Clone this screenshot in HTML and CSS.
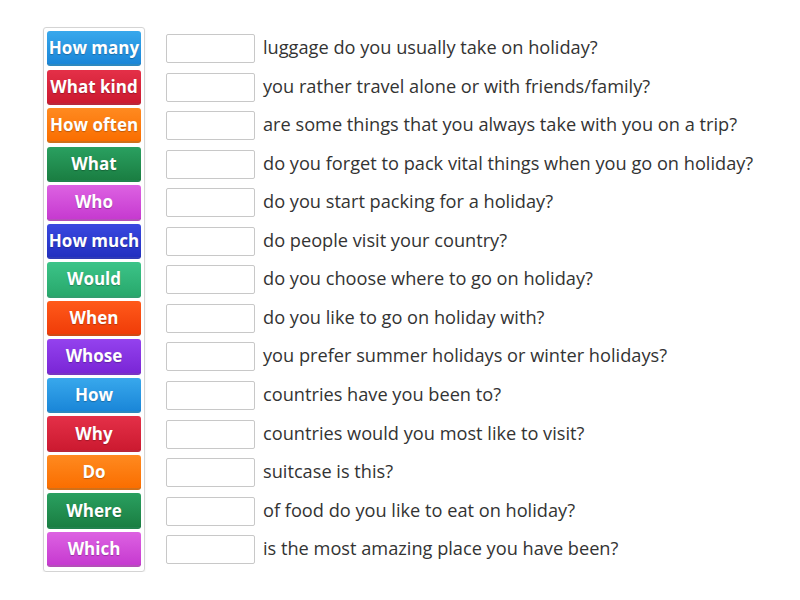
FILE: index.html
```html
<!DOCTYPE html>
<html lang="en">
<head>
  <meta charset="UTF-8">
  <title>Match up: Holiday questions</title>
  <link rel="stylesheet" href="styles.css">
</head>
<body>
  <div class="game">
    <!-- Answer tiles -->
    <div class="tiles">
      <div class="tile blue">How many</div>
      <div class="tile red">What kind</div>
      <div class="tile orange">How often</div>
      <div class="tile green">What</div>
      <div class="tile pink">Who</div>
      <div class="tile navy">How much</div>
      <div class="tile mint">Would</div>
      <div class="tile flame">When</div>
      <div class="tile purple">Whose</div>
      <div class="tile blue">How</div>
      <div class="tile red">Why</div>
      <div class="tile orange">Do</div>
      <div class="tile green">Where</div>
      <div class="tile pink">Which</div>
    </div>

    <!-- Question rows -->
    <div class="questions">
      <div class="row"><span class="slot"></span><span class="text">luggage do you usually take on holiday?</span></div>
      <div class="row"><span class="slot"></span><span class="text">you rather travel alone or with friends/family?</span></div>
      <div class="row"><span class="slot"></span><span class="text">are some things that you always take with you on a trip?</span></div>
      <div class="row"><span class="slot"></span><span class="text">do you forget to pack vital things when you go on holiday?</span></div>
      <div class="row"><span class="slot"></span><span class="text">do you start packing for a holiday?</span></div>
      <div class="row"><span class="slot"></span><span class="text">do people visit your country?</span></div>
      <div class="row"><span class="slot"></span><span class="text">do you choose where to go on holiday?</span></div>
      <div class="row"><span class="slot"></span><span class="text">do you like to go on holiday with?</span></div>
      <div class="row"><span class="slot"></span><span class="text">you prefer summer holidays or winter holidays?</span></div>
      <div class="row"><span class="slot"></span><span class="text">countries have you been to?</span></div>
      <div class="row"><span class="slot"></span><span class="text">countries would you most like to visit?</span></div>
      <div class="row"><span class="slot"></span><span class="text">suitcase is this?</span></div>
      <div class="row"><span class="slot"></span><span class="text">of food do you like to eat on holiday?</span></div>
      <div class="row"><span class="slot"></span><span class="text">is the most amazing place you have been?</span></div>
    </div>
  </div>
</body>
</html>
```

FILE: styles.css
```css
body { margin: 0; background: #fff; font-family: "Open Sans", "Liberation Sans", sans-serif; color: #333; }
.game { display: flex; align-items: flex-start; padding: 27px 0 0 43px; }

.tiles { display: flex; flex-direction: column; gap: 3.15px; padding: 3px 3px 4px; border: 1px solid #d4d4d4; border-radius: 3px; box-shadow: 0 1px 2px rgba(0, 0, 0, 0.08); }
.tile { width: 94px; height: 35.4px; box-sizing: border-box; border-radius: 3px; display: flex; align-items: center; justify-content: center; color: #fff; font-weight: 700; font-size: 17px; white-space: nowrap; text-shadow: 0 1px 1px rgba(0, 0, 0, 0.25); border-bottom: 2px solid rgba(0, 0, 0, 0.18); }
.blue { background: linear-gradient(#38a8ec, #1a86d8); }
.red { background: linear-gradient(#e43048, #cc1a30); }
.orange { background: linear-gradient(#ff8a20, #fa6e00); }
.green { background: linear-gradient(#2aa060, #1a7e42); }
.pink { background: linear-gradient(#dd62e2, #c63ad0); }
.navy { background: linear-gradient(#3a48e0, #2230c0); }
.mint { background: linear-gradient(#3cc488, #28a86c); }
.flame { background: linear-gradient(#ff5a1a, #f03c08); }
.purple { background: linear-gradient(#9442ee, #7a26d6); }

.questions { display: flex; flex-direction: column; gap: 3.15px; padding-top: 4px; margin-left: 21px; }
.row { display: flex; align-items: center; height: 35.4px; }
.slot { width: 89px; height: 29px; box-sizing: border-box; border: 1px solid #c8c8c8; border-radius: 2px; background: #fff; }
.text { margin-left: 8px; padding-bottom: 3px; font-size: 18.2px; white-space: nowrap; }
```
